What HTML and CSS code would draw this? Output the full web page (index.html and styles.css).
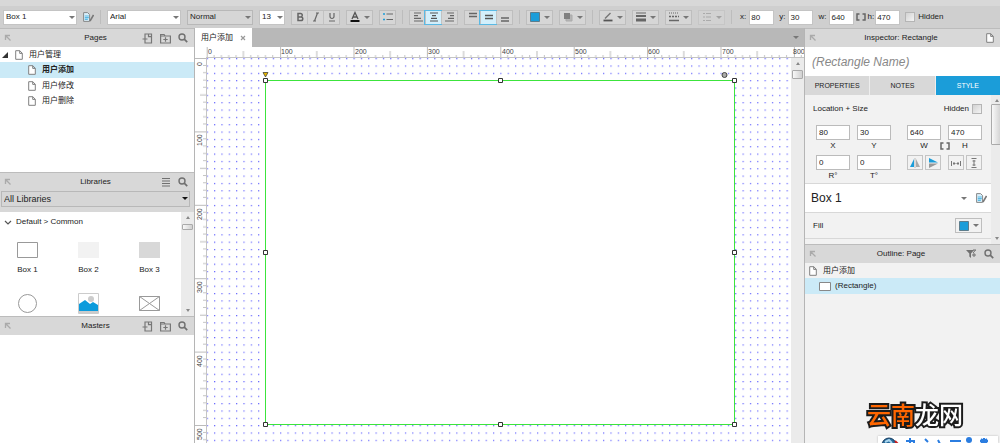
FILE: index.html
```html
<!DOCTYPE html>
<html lang="en">
<head>
  <meta charset="UTF-8">
  <meta name="viewport" content="width=device-width, initial-scale=1">
  <title>用户添加</title>
  <link rel="stylesheet" href="styles.css">
</head>
<body>

<svg class="sprite" aria-hidden="true">
  <symbol id="i-dock" viewBox="0 0 8 8"><path d="M1.500 6V1.500H6M1.500 1.500l5 5" fill="none" stroke="#aaa" stroke-width="1.300"/></symbol>
  <symbol id="i-page" viewBox="0 0 8 10"><path d="M.7.7h4.100l2.500 2.600v6H.7zM4.700.7v2.700h2.600" fill="#fff" stroke="#808080"/></symbol>
  <symbol id="i-addpage" viewBox="0 0 11 11"><path d="M3 3.500V1h6.500v9H3V8.500M6.500 1v2.700h3M.5 6h5M3 3.500v5" fill="none" stroke="#777" stroke-width="1.200"/></symbol>
  <symbol id="i-addfolder" viewBox="0 0 11 11"><path d="M.6 10V1.500h3.500l1 1.500h5.300v7zM.6 3h5M5.500 4.300v4.400M3.300 6.500h4.400" fill="none" stroke="#777" stroke-width="1.200"/></symbol>
  <symbol id="i-search" viewBox="0 0 10 10"><circle cx="4" cy="4" r="3" fill="none" stroke="#707070" stroke-width="1.400"/><path d="M6.200 6.200L9.200 9.200" stroke="#707070" stroke-width="1.700"/></symbol>
  <symbol id="i-menu" viewBox="0 0 10 10"><path d="M1 1.500h8M1 4h8M1 6.500h8M1 9h8" stroke="#707070" stroke-width="1.200"/></symbol>
  <symbol id="i-style" viewBox="0 0 11 10"><path d="M.6.6h4l2 2v6.800h-6z" fill="#d8effa" stroke="#888"/><path d="M1.800 4h4M1.800 5.700h4M1.800 7.400h3" stroke="#5bb9e4" stroke-width="1.200"/><path d="M10.500 3L7 9" stroke="#777" stroke-width="1.500"/></symbol>
  <symbol id="i-link" viewBox="0 0 10 8"><path d="M3.500 1H1v6h2.500M6.500 1H9v6H6.500" fill="none" stroke="#666" stroke-width="1.500"/></symbol>
  <symbol id="i-filter" viewBox="0 0 11 10"><path d="M0 1h8L5 4.500V9L3.300 7.500v-3z" fill="#707070"/><path d="M7 1h3M8 4v4M6 6h4M7 4l2.500-3" stroke="#707070"/></symbol>
</svg>

<header class="toolbar">
  <label class="pick w74"><select aria-label="Style"><option>Box 1</option></select></label>
  <button class="plain" aria-label="Edit style"><svg width="11" height="10"><use href="#i-style"/></svg></button>
  <i class="sep"></i>
  <label class="pick w74"><select aria-label="Font"><option>Arial</option></select></label>
  <label class="pick w66 grey"><select aria-label="Weight"><option>Normal</option></select></label>
  <label class="pick w26"><select aria-label="Size"><option>13</option></select></label>
  <div class="group">
    <button aria-label="Bold"><svg width="10" height="10"><path d="M3 1.500h2.600a1.600 1.600 0 010 3.400H3zM3 5h3a1.800 1.800 0 010 3.600H3z" fill="none" stroke="#666" stroke-width="1.500"/></svg></button>
    <button aria-label="Italic"><svg width="10" height="10"><path d="M6.500 1L3.500 9M5 1h3M2 9h3" stroke="#666" stroke-width="1.200"/></svg></button>
    <button aria-label="Underline"><svg width="10" height="10"><path d="M3 1v3.500a2 2 0 004 0V1M2 9h6" fill="none" stroke="#666" stroke-width="1.200"/></svg></button>
  </div>
  <div class="group"><button class="drop" aria-label="Text color"><svg width="10" height="12"><path d="M2 8l3-6.500L8 8M3 6h4" fill="none" stroke="#555" stroke-width="1.300"/><path d="M.5 10h9" stroke="#111" stroke-width="2"/></svg></button></div>
  <div class="group"><button aria-label="Bullets"><svg width="10" height="10"><path d="M3.500 2H10M3.500 7.500H10" stroke="#666" stroke-width="1.200"/><path d="M0 2h2M0 7.500h2" stroke="#1b9dd9" stroke-width="1.500"/></svg></button></div>
  <i class="sep"></i>
  <div class="group">
    <button aria-label="Align left"><svg width="10" height="10"><path d="M1 1h7M1 3.700h4M1 6.300h7M1 9h9" stroke="#666" stroke-width="1.200"/></svg></button>
    <button class="on" aria-label="Align center"><svg width="10" height="10"><path d="M1 1h8M3 3.700h4M2 6.300h6M1 9h8" stroke="#555" stroke-width="1.200"/></svg></button>
    <button aria-label="Align right"><svg width="10" height="10"><path d="M2 1h7M5 3.700h4M3 6.300h6M0 9h9" stroke="#666" stroke-width="1.200"/></svg></button>
  </div>
  <div class="group">
    <button aria-label="Align top"><svg width="10" height="10"><path d="M1 1.500h8M1 4.500h8" stroke="#666" stroke-width="1.300"/></svg></button>
    <button class="on" aria-label="Align middle"><svg width="10" height="10"><path d="M1 3.500h8M1 6.500h8" stroke="#555" stroke-width="1.300"/></svg></button>
    <button aria-label="Align bottom"><svg width="10" height="10"><path d="M1 6h8M1 9h8" stroke="#666" stroke-width="1.300"/></svg></button>
  </div>
  <i class="sep"></i>
  <div class="group"><button class="drop" aria-label="Fill color"><svg width="10" height="10"><path d="M.5.5h9v9h-9z" fill="#1b9dd9" stroke="#5d7d8c"/></svg></button></div>
  <div class="group"><button class="drop" aria-label="Shadow"><svg width="10" height="10"><path d="M3 3h6v6H3z" fill="#b5b5b5" stroke="#aaa"/><path d="M1 1h6v6H1z" fill="#808080"/></svg></button></div>
  <i class="sep"></i>
  <div class="group"><button class="drop" aria-label="Line color"><svg width="10" height="10"><path d="M2 6.500L7.500 1" stroke="#777" stroke-width="1.500"/><path d="M.5 8.500h9" stroke="#555" stroke-width="1.800"/></svg></button></div>
  <div class="group"><button class="drop" aria-label="Line width"><svg width="10" height="10"><path d="M0 1h10" stroke="#666"/><path d="M0 4h10" stroke="#666" stroke-width="2"/><path d="M0 8h10" stroke="#666" stroke-width="3"/></svg></button></div>
  <div class="group"><button class="drop" aria-label="Line style"><svg width="10" height="10"><path d="M0 1h10" stroke="#666" stroke-dasharray="1 1"/><path d="M0 4.500h10" stroke="#666" stroke-dasharray="2 1" stroke-width="1.300"/><path d="M0 8.500h10" stroke="#666" stroke-width="1.500"/></svg></button></div>
  <div class="group faded"><button class="drop" aria-label="Arrow style" disabled><svg width="10" height="10"><path d="M1 1.500h8M1 5h8M1 8.500h8" stroke="#888" stroke-dasharray="2 1 6 1"/></svg></button></div>
  <i class="sep"></i>
  <div class="coords">
    <label>x: <input value="80"></label>
    <label>y: <input value="30"></label>
    <label>w: <input value="640"></label>
    <label class="tied"><svg width="10" height="8"><use href="#i-link"/></svg>h: <input value="470"></label>
    <label class="check"><input type="checkbox">Hidden</label>
  </div>
</header>

<main class="workspace">
  <aside class="side">
    <section class="panel pages">
      <div class="head">
        <svg width="8" height="8"><use href="#i-dock"/></svg>
        <h2>Pages</h2>
        <div class="tools">
          <button aria-label="Add page"><svg width="11" height="11"><use href="#i-addpage"/></svg></button>
          <button aria-label="Add folder"><svg width="11" height="11"><use href="#i-addfolder"/></svg></button>
          <button aria-label="Search pages"><svg width="10" height="10"><use href="#i-search"/></svg></button>
        </div>
      </div>
      <ul class="tree">
        <li class="root"><svg width="6" height="6"><path d="M6 0v6H0z" fill="#333"/></svg><svg width="8" height="10"><use href="#i-page"/></svg>用户管理</li>
        <li class="selected"><svg width="8" height="10"><use href="#i-page"/></svg>用户添加</li>
        <li><svg width="8" height="10"><use href="#i-page"/></svg>用户修改</li>
        <li><svg width="8" height="10"><use href="#i-page"/></svg>用户删除</li>
      </ul>
    </section>

    <section class="panel libraries">
      <div class="head">
        <svg width="8" height="8"><use href="#i-dock"/></svg>
        <h2>Libraries</h2>
        <div class="tools">
          <button aria-label="Library menu"><svg width="10" height="10"><use href="#i-menu"/></svg></button>
          <button aria-label="Search libraries"><svg width="10" height="10"><use href="#i-search"/></svg></button>
        </div>
      </div>
      <div class="library-pick">
        <label class="pick grey dark"><select aria-label="Library"><option>All Libraries</option></select></label>
      </div>
      <div class="scroll-area">
        <div class="library">
          <h3><svg width="8" height="5"><path d="M1 1l3 3 3-3" fill="none" stroke="#555" stroke-width="1.200"/></svg>Default &gt; Common</h3>
          <div class="shapes">
            <figure><svg width="21" height="16"><path d="M.5.5h20v15H.5z" fill="#fff" stroke="#999"/></svg><figcaption>Box 1</figcaption></figure>
            <figure><svg width="21" height="16"><path d="M0 0h21v16H0z" fill="#f2f2f2"/></svg><figcaption>Box 2</figcaption></figure>
            <figure><svg width="21" height="16"><path d="M0 0h21v16H0z" fill="#d8d8d8"/></svg><figcaption>Box 3</figcaption></figure>
            <figure><svg width="21" height="21"><circle cx="10.500" cy="10.500" r="9" fill="#fff" stroke="#999"/></svg></figure>
            <figure><svg width="21" height="21"><path d="M.5.5h20v20H.5z" fill="#fff" stroke="#ccc"/><circle cx="13" cy="6" r="3" fill="#ccc"/><path d="M1 11l6-4 5 4 3-2 5 3v6H1z" fill="#0b9bdc"/><path d="M1 18h19v2H1z" fill="#ccc"/></svg></figure>
            <figure><svg width="21" height="21"><path d="M.5 3.500h20v14H.5zM.5 3.500l20 14M20.500 3.500l-20 14" fill="none" stroke="#999"/></svg></figure>
          </div>
        </div>
        <div class="scrollbar"><i class="up"></i><b></b><i class="down"></i></div>
      </div>
    </section>

    <section class="panel masters">
      <div class="head">
        <svg width="8" height="8"><use href="#i-dock"/></svg>
        <h2>Masters</h2>
        <div class="tools">
          <button aria-label="Add master"><svg width="11" height="11"><use href="#i-addpage"/></svg></button>
          <button aria-label="Add folder"><svg width="11" height="11"><use href="#i-addfolder"/></svg></button>
          <button aria-label="Search masters"><svg width="10" height="10"><use href="#i-search"/></svg></button>
        </div>
      </div>
    </section>
  </aside>

  <section class="editor">
    <nav class="tabs">
      <a href="#" class="tab">用户添加 <svg width="6" height="6"><path d="M1 1l4 4M5 1L1 5" stroke="#999" stroke-width="1.200"/></svg></a>
      <i class="caret"></i>
    </nav>
    <div class="stage">
      <svg class="ruler-x" width="100%" height="11">
        <defs>
          <pattern id="ticks-x" x="11.700" width="73.400" height="11" patternUnits="userSpaceOnUse">
            <path d="M.5 0v11M36.700 4v7" stroke="#bbb"/>
            <path d="M7.340 8v3M14.680 8v3M22.020 8v3M29.360 8v3M44.040 8v3M51.380 8v3M58.720 8v3M66.060 8v3" stroke="#c4c4c4"/>
          </pattern>
        </defs>
        <rect x="11" width="100%" height="11" fill="url(#ticks-x)"/>
        <path d="M11 10.500h2000" stroke="#c4c4c4"/>
        <g>
          <text x="13" y="7">0</text><text x="86" y="7">100</text><text x="160" y="7">200</text>
          <text x="233" y="7">300</text><text x="307" y="7">400</text><text x="380" y="7">500</text>
          <text x="453" y="7">600</text><text x="527" y="7">700</text><text x="598" y="7">800</text>
        </g>
      </svg>
      <svg class="ruler-y" width="12" height="100%">
        <defs>
          <pattern id="ticks-y" width="12" height="73.400" patternUnits="userSpaceOnUse">
            <path d="M0 .5h12M5 37h7" stroke="#bbb"/>
            <path d="M8 7.340h4M8 14.680h4M8 22.020h4M8 29.360h4M8 44.040h4M8 51.380h4M8 58.720h4M8 66.060h4" stroke="#c4c4c4"/>
          </pattern>
        </defs>
        <rect width="12" height="100%" fill="url(#ticks-y)"/>
        <path d="M11.500 0v2000" stroke="#c4c4c4"/>
        <g>
          <text transform="translate(7 8) rotate(-90)">0</text>
          <text transform="translate(7 88) rotate(-90)">100</text>
          <text transform="translate(7 162) rotate(-90)">200</text>
          <text transform="translate(7 235) rotate(-90)">300</text>
          <text transform="translate(7 309) rotate(-90)">400</text>
          <text transform="translate(7 382) rotate(-90)">500</text>
        </g>
      </svg>
      <svg class="canvas" width="100%" height="100%">
        <defs>
          <pattern id="dots" x="-.3" y=".1" width="7.340" height="7.340" patternUnits="userSpaceOnUse">
            <rect width="1.200" height="1.200" fill="#6464ff"/>
          </pattern>
        </defs>
        <rect width="100%" height="100%" fill="url(#dots)"/>
        <rect x="58.500" y="22.500" width="469" height="344" fill="#fff" stroke="#3ce43c"/>
        <g fill="#fff" stroke="#333">
          <path d="M56.500 20.500h4v4h-4zM291.500 20.500h4v4h-4zM525.500 20.500h4v4h-4z"/>
          <path d="M56.500 192.500h4v4h-4zM525.500 192.500h4v4h-4z"/>
          <path d="M56.500 364.500h4v4h-4zM291.500 364.500h4v4h-4zM525.500 364.500h4v4h-4z"/>
        </g>
        <path d="M56 14.500h5l-2.500 4.500z" fill="#e8b800" stroke="#333" stroke-width=".7"/>
        <circle cx="517.500" cy="17" r="2.500" fill="#aaa" stroke="#444"/>
      </svg>
      <div class="scrollbar"><i class="up"></i><b></b></div>
    </div>
  </section>

  <aside class="side right">
    <section class="panel inspector">
      <div class="head">
        <svg width="8" height="8"><use href="#i-dock"/></svg>
        <h2>Inspector: Rectangle</h2>
        <div class="tools"><button aria-label="Page"><svg width="8" height="10"><use href="#i-page"/></svg></button></div>
      </div>
      <input class="shape-name" aria-label="Shape name" placeholder="(Rectangle Name)">
      <div class="switch">
        <button>PROPERTIES</button>
        <button>NOTES</button>
        <button class="active">STYLE</button>
      </div>
      <div class="scroll-area">
        <div class="style-body">
          <div class="location">
            <div class="row"><span>Location + Size</span><label class="check">Hidden<input type="checkbox"></label></div>
            <div class="fields">
              <label><input value="80">X</label>
              <label><input value="30">Y</label>
              <label class="wide"><input value="640">W</label>
              <svg class="lock" width="10" height="8"><use href="#i-link"/></svg>
              <label><input value="470">H</label>
            </div>
            <div class="fields">
              <label><input value="0">R°</label>
              <label><input value="0">T°</label>
              <div class="pair wide">
                <button aria-label="Flip horizontal"><svg width="10" height="10"><path d="M4 1v8H0z" fill="#1b9dd9"/><path d="M6 1v8h4z" fill="#aaa"/><path d="M5 0v10" stroke="#999" stroke-width=".6"/></svg></button>
                <button aria-label="Flip vertical"><svg width="10" height="10"><path d="M1 0v4.500h9z" fill="#1b9dd9"/><path d="M1 10V5.500h9z" fill="#999"/></svg></button>
              </div>
              <div class="pair">
                <button aria-label="Fit width"><svg width="10" height="10"><path d="M.5 3v5M9.500 3v5M2 5.500h2.500M5.500 5.500H8M3 4v3M7 4v3" stroke="#777"/></svg></button>
                <button aria-label="Fit height"><svg width="10" height="10"><path d="M2.500.5h5M2.500 9.500h5M5 2v6M3.500 3h3M3.500 7h3" stroke="#777"/></svg></button>
              </div>
            </div>
          </div>
          <div class="style-name"><span>Box 1</span><i class="caret"></i><button class="plain" aria-label="Edit style"><svg width="11" height="10"><use href="#i-style"/></svg></button></div>
          <div class="fill"><span>Fill</span><div class="group"><button class="drop" aria-label="Fill"><svg width="10" height="10"><path d="M.5.5h9v9h-9z" fill="#1b9dd9" stroke="#5d7d8c"/></svg></button></div></div>
        </div>
        <div class="scrollbar"><i class="up"></i><b class="tall"></b><i class="down"></i></div>
      </div>
    </section>

    <section class="panel outline">
      <div class="head">
        <svg width="8" height="8"><use href="#i-dock"/></svg>
        <h2>Outline: Page</h2>
        <div class="tools">
          <button aria-label="Filter"><svg width="11" height="10"><use href="#i-filter"/></svg></button>
          <button aria-label="Search outline"><svg width="10" height="10"><use href="#i-search"/></svg></button>
        </div>
      </div>
      <ul class="tree">
        <li class="top"><svg width="8" height="10"><use href="#i-page"/></svg>用户添加</li>
        <li class="selected item"><svg width="12" height="9"><path d="M.5.5h11v8H.5z" fill="#fff" stroke="#888"/></svg>(Rectangle)</li>
      </ul>
    </section>
  </aside>
</main>

<div class="watermark"><span>云南</span>龙网</div>
<div class="ime">
  <svg width="120" height="7">
    <circle cx="11" cy="9" r="7" fill="#286a9b" stroke="#163a5c"/><path d="M7 6l4-2 3 3" fill="none" stroke="#a9d6ef" stroke-width="2"/><path d="M17 5l3 3" stroke="#c22" stroke-width="2"/>
    <g fill="none" stroke="#2b7de0" stroke-width="2"><path d="M32 2v5M28 5h8v3M47 3l3 3M60 4l2 4M72 5h11M106 2v5M102 5h8M103 3l6 4M109 3l-6 4"/></g>
    <circle cx="91" cy="4" r="3" fill="#2b7de0"/>
  </svg>
</div>

</body>
</html>
```
FILE: styles.css
```css
* {
  box-sizing: border-box;
}
body {
  margin: 0;
  height: 100vh;
  display: flex;
  flex-direction: column;
  overflow: hidden;
  font: 8px/10px "Liberation Sans", Arial, "Noto Sans CJK SC", sans-serif;
  color: #222;
  background: #f2f2f2;
}
button, input, select {
  font: inherit;
  color: inherit;
  margin: 0;
  padding: 0;
  border-radius: 0;
}
button {
  display: flex;
  align-items: center;
  justify-content: center;
  border: none;
  background: none;
}
svg {
  display: block;
  flex: none;
}
h2, h3, ul, figure {
  margin: 0;
  padding: 0;
  font-size: 8px;
  font-weight: normal;
  list-style: none;
}
.sprite {
  position: absolute;
  width: 0;
  height: 0;
}

/* toolbar */
.toolbar {
  display: flex;
  align-items: center;
  gap: 6px;
  height: 28px;
  padding: 6px 3px 0;
  flex: none;
  white-space: nowrap;
  background: linear-gradient(#d8d8d8 6px, #cfcfcf 6px);
}
.pick {
  position: relative;
  display: block;
  height: 15px;
}
.pick select {
  display: block;
  width: 100%;
  height: 100%;
  padding-left: 2px;
  appearance: none;
  border: 1px solid #c4c4c4;
  background: #fff;
}
.pick::after, .drop::after, .caret {
  content: "";
  border: 3px solid transparent;
  border-top-color: #777;
  border-bottom: none;
}
.pick::after {
  position: absolute;
  right: 2px;
  top: 6px;
}
.pick.grey select {
  background: #d6d6d6;
  border-color: #b8b8b8;
}
.pick.dark::after {
  border-top-color: #111;
}
.w74 { width: 74px; }
.w66 { width: 66px; }
.w26 { width: 26px; }
.sep {
  width: 1px;
  height: 14px;
  background: #bdbdbd;
}
.group {
  display: flex;
  height: 15px;
  border: 1px solid #bebebe;
  background: #d6d6d6;
}
.group button {
  width: 15px;
}
.group button + button {
  width: 16px;
  border-left: 1px solid #c2c2c2;
}
.group .drop {
  width: 25px;
  gap: 4px;
}
.group .on {
  outline: 1px solid #5ab9e4;
  background: #d3effb;
}
.faded {
  opacity: .5;
}
.coords {
  display: flex;
  align-items: center;
  gap: 5px;
  padding-left: 2px;
}
.coords label {
  display: flex;
  align-items: center;
  gap: 3px;
}
.coords input:not([type=checkbox]) {
  width: 25px;
  height: 15px;
  padding-left: 1px;
  border: 1px solid #c4c4c4;
}
.coords .tied {
  gap: 1px;
  margin-left: -3px;
}
.check {
  display: flex;
  align-items: center;
  gap: 3px;
}
.check input {
  appearance: none;
  width: 10px;
  height: 10px;
  border: 1px solid #b5b5b5;
  background: linear-gradient(135deg, #d2d2d2, #f4f4f4);
}

/* panels */
.workspace {
  flex: 1;
  min-height: 0;
  display: grid;
  grid-template-columns: 194px 1fr 196px;
}
.side, .panel {
  display: flex;
  flex-direction: column;
  min-height: 0;
}
.panel {
  background: #fff;
}
.head {
  display: flex;
  align-items: center;
  justify-content: space-between;
  position: relative;
  flex: none;
  height: 19px;
  padding: 0 6px 0 4px;
  border-top: 1px solid #bcbcbc;
  background: #d8d8d8;
}
.head h2 {
  position: absolute;
  left: 0;
  right: 3px;
  text-align: center;
  pointer-events: none;
}
.tools {
  display: flex;
  align-items: center;
  gap: 7px;
}
.pages {
  height: 144px;
}
.libraries {
  height: 144px;
}
.masters, .outline {
  flex: 1;
}
.tree li {
  display: flex;
  align-items: center;
  gap: 6px;
  height: 15px;
  padding-left: 28px;
}
.tree .root {
  padding-left: 2px;
}
.tree .root svg + svg {
  margin-left: 1px;
}
.tree .selected {
  height: 16px;
  background: #cbeaf7;
}
.pages .selected {
  font-weight: bold;
}
.library-pick {
  height: 21px;
  padding: 0 4px 5px 1px;
  background: #d8d8d8;
  font-size: 9px;
}
.library-pick .pick {
  height: 16px;
}
.scroll-area {
  display: flex;
  flex: 1;
  min-height: 0;
  overflow: hidden;
}
.scrollbar {
  display: flex;
  flex-direction: column;
  align-items: center;
  width: 13px;
  flex: none;
  padding: 4px 0;
  background: #ebebeb;
}
.scrollbar i {
  border: 2px solid transparent;
}
.scrollbar .up {
  border-bottom: 3px solid #888;
  border-top: none;
}
.scrollbar .down {
  margin-top: auto;
  border-top: 3px solid #888;
  border-bottom: none;
}
.scrollbar b {
  width: 11px;
  height: 6px;
  margin-top: 5px;
  border: 1px solid #aaa;
  border-radius: 1px;
  background: linear-gradient(90deg, #f8f8f8, #d0d0d0);
}
.library {
  flex: 1;
  padding-top: 5px;
}
.library h3 {
  display: flex;
  align-items: center;
  gap: 4px;
  padding-left: 4px;
}
.shapes {
  display: grid;
  grid-template-columns: repeat(3, 21px);
  gap: 18px 40px;
  padding: 15px 0 0 17px;
}
figcaption {
  margin-top: 7px;
  text-align: center;
  white-space: nowrap;
}

/* editor */
.editor {
  display: flex;
  flex-direction: column;
  min-width: 0;
  border-left: 1px solid #b5b5b5;
  background: #fff;
}
.tabs {
  display: flex;
  align-items: center;
  justify-content: space-between;
  flex: none;
  height: 19px;
  padding-right: 5px;
  background: #b8b8b8;
}
.tab {
  display: flex;
  align-items: center;
  gap: 7px;
  height: 100%;
  padding: 0 6px;
  background: #fff;
  color: #222;
  text-decoration: none;
}
.stage {
  display: grid;
  grid-template-columns: 12px 1fr 13px;
  grid-template-rows: 11px 1fr;
  flex: 1;
  min-height: 0;
}
.ruler-x {
  grid-column: 1 / 4;
}
.stage text {
  font-size: 7px;
  fill: #444;
}
.stage .scrollbar b {
  height: 9px;
}

/* inspector */
.right {
  border-left: 1px solid #b5b5b5;
}
.right .panel {
  background: #f2f2f2;
}
.inspector {
  height: 216px;
}
.shape-name {
  height: 29px;
  padding-left: 7px;
  border: none;
  background: #fff;
  font-size: 12px;
  font-style: italic;
}
.shape-name::placeholder {
  color: #888;
}
.switch {
  display: grid;
  grid-template-columns: repeat(3, 1fr);
  gap: 1px;
  height: 19px;
  flex: none;
  background: #eee;
}
.switch button {
  background: #d8d8d8;
  font-size: 7px;
}
.switch .active {
  background: #1b9dd9;
  color: #fff;
}
.right .scrollbar {
  width: 11px;
}
.scrollbar .tall {
  height: 41px;
  margin-top: 2px;
}
.style-body {
  flex: 1;
}
.location {
  height: 88px;
  padding: 9px 9px 0 8px;
}
.row, .fill {
  display: flex;
  align-items: center;
  justify-content: space-between;
}
.row {
  margin-bottom: 11px;
}
.fields {
  display: flex;
  gap: 7px;
  position: relative;
  height: 30px;
  padding-left: 3px;
}
.fields label {
  width: 34px;
  text-align: center;
}
.fields input {
  display: block;
  width: 34px;
  height: 15px;
  margin-bottom: 1px;
  padding-left: 2px;
  border: 1px solid #bbb;
  background: #fff;
}
.fields .wide {
  margin-left: 9px;
}
.lock {
  position: absolute;
  right: 32px;
  top: 17px;
}
.pair {
  display: flex;
  justify-content: space-between;
  width: 34px;
}
.pair button {
  width: 16px;
  height: 15px;
  border: 1px solid #c4c4c4;
}
.style-name {
  display: flex;
  align-items: center;
  gap: 9px;
  height: 30px;
  padding: 0 4px 0 6px;
  border: 1px solid #d8d8d8;
  border-width: 1px 0;
  background: #fff;
  font-size: 12px;
}
.style-name span {
  flex: 1;
}
.fill {
  height: 26px;
  padding: 0 9px 0 8px;
  border-bottom: 1px solid #d8d8d8;
}
.fill .group {
  background: #f2f2f2;
}
.outline .top {
  padding-left: 4px;
}
.outline .item {
  gap: 4px;
  padding-left: 14px;
}

/* overlays */
.watermark {
  position: fixed;
  right: 37px;
  bottom: 15px;
  font: 500 24px/28px "Noto Sans CJK SC", sans-serif;
  color: #fff;
  -webkit-text-stroke: 4px #1c1c1c;
  paint-order: stroke fill;
}
.watermark span {
  color: #f60;
}
.ime {
  position: fixed;
  right: 2px;
  bottom: 0;
  background: #fff;
  box-shadow: 0 0 2px #aaa;
}
```
